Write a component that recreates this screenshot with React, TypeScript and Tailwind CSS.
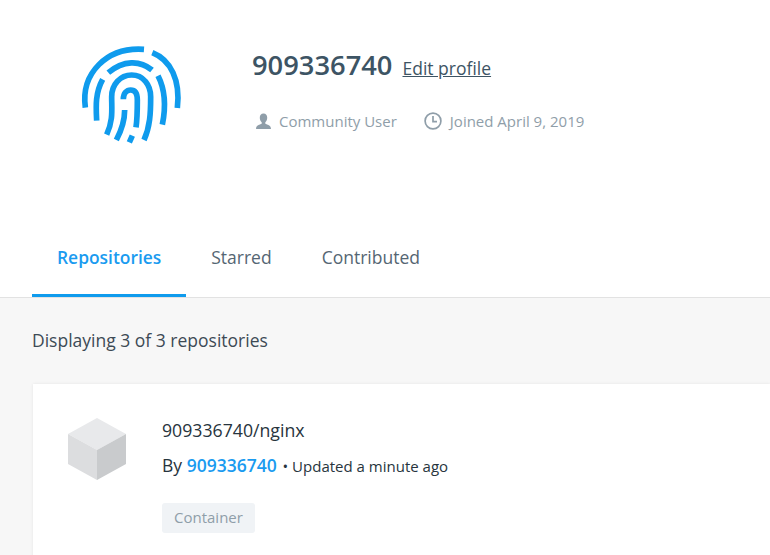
import React from 'react'

function Fingerprint() {
  return (
    <svg width="140" height="130" viewBox="0 0 420 390" fill="none" stroke="#0f9bed" strokeWidth="17" strokeLinecap="butt">
      <path d="M76 233 C62 130 140 50 252 58" />
      <path d="M277 68 C332 90 362 150 352 234" />
      <path d="M145 128 C190 90 240 90 276 120" />
      <path d="M128 148 C105 190 108 230 110 272" />
      <path d="M294 137 C316 180 318 230 307 284" />
      <path d="M140 314 C160 270 155 240 155 200 C155 165 180 135 215 135 C250 135 272 165 272 200 C272 250 270 290 252 330" />
      <path d="M190 208 C190 190 200 180 212 180 C228 180 232 195 232 210 C232 240 232 265 228 292" />
      <path d="M194 240 C194 270 185 300 169 330" />
      <path d="M217 317 L208 337" />
    </svg>
  )
}

function Cube() {
  return (
    <svg width="58" height="62" viewBox="0 0 58 62">
      <path d="M29 0 L58 16 L29 32 L0 16 Z" fill="#e8e9eb" />
      <path d="M0 16 L29 32 L29 62 L0 46 Z" fill="#dcdddf" />
      <path d="M58 16 L29 32 L29 62 L58 46 Z" fill="#c9cbcd" />
    </svg>
  )
}

const tabs = ['Repositories', 'Starred', 'Contributed']

export default function App() {
  return (
    <div className="flex h-[555px] w-[770px] flex-col overflow-hidden bg-white font-['Open_Sans',sans-serif]">
      <div className="flex h-[225px] shrink-0 items-start pl-[60px] pt-[30px]">
        <Fingerprint />
        <div className="ml-[52px] pt-[16px]">
          <div className="flex items-baseline gap-[10px]">
            <h1 className="text-[27.3px] font-semibold leading-[38px] text-[#3d5464]">909336740</h1>
            <a className="text-[17.5px] text-[#3d5464] underline">Edit profile</a>
          </div>
          <div className="mt-[27px] flex items-center text-[15px] leading-[20px] text-[#8f9ea9]">
            <svg width="17" height="17" viewBox="0 0 16 16" fill="#8f9ea9" className="ml-[3px]">
              <path d="M8 0.5 C10.3 0.5 11.5 2.2 11.5 4.5 C11.5 6.5 10.6 8 9.7 8.8 L9.7 10 C11.5 10.8 15 11.4 15 14.5 L15 15 L1 15 L1 14.5 C1 11.4 4.5 10.8 6.3 10 L6.3 8.8 C5.4 8 4.5 6.5 4.5 4.5 C4.5 2.2 5.7 0.5 8 0.5 Z" />
            </svg>
            <span className="ml-[7px]">Community User</span>
            <svg width="18" height="18" viewBox="0 0 18 18" fill="none" stroke="#8f9ea9" strokeWidth="1.7" className="ml-[27px]">
              <circle cx="9" cy="9" r="7.9" />
              <path d="M9 4 L9 9.6 L13 9.6" />
            </svg>
            <span className="ml-[8px]">Joined April 9, 2019</span>
          </div>
        </div>
      </div>

      <div className="flex h-[73px] shrink-0 border-b border-[#e2e2e2] pl-[32px]">
        {tabs.map((tab, index) => (
          <div
            key={tab}
            className={
              index === 0
                ? 'flex h-[72px] items-center border-b-[3px] border-[#0f9bed] px-[25px] pb-[5px] text-[17.4px] font-semibold text-[#1a9bf0]'
                : 'flex h-[72px] items-center border-b-[3px] border-transparent px-[25px] pb-[5px] text-[17.5px] text-[#556673]'
            }
          >
            {tab}
          </div>
        ))}
      </div>

      <div className="flex-1 bg-[#f7f7f7] pl-[32px] pt-[29px]">
        <p className="text-[17.5px] leading-[26px] text-[#3d4a55]">Displaying 3 of 3 repositories</p>
        <div className="ml-[1px] mt-[31px] flex h-[200px] bg-white pl-[35px] pt-[35px] shadow-[0_0_3px_rgba(0,0,0,0.08)]">
          <div className="-mt-[1px]">
            <Cube />
          </div>
          <div className="ml-[36px]">
            <h2 className="-mt-[2px] text-[17.7px] font-medium leading-[26px] text-[#27343d]">909336740/nginx</h2>
            <p className="mt-[10px] leading-[24px] text-[#27343d]">
              <span className="text-[17.5px]">By </span>
              <span className="text-[17.5px] font-semibold text-[#1a9bf0]">909336740</span>
              <span className="ml-[2px] text-[15px]"> • Updated a minute ago</span>
            </p>
            <span className="mt-[25px] inline-block rounded-[3px] bg-[#f0f3f6] px-[12px] pb-[2px] text-[15px] leading-[28px] text-[#8f9ea9]">
              Container
            </span>
          </div>
        </div>
      </div>
    </div>
  )
}
